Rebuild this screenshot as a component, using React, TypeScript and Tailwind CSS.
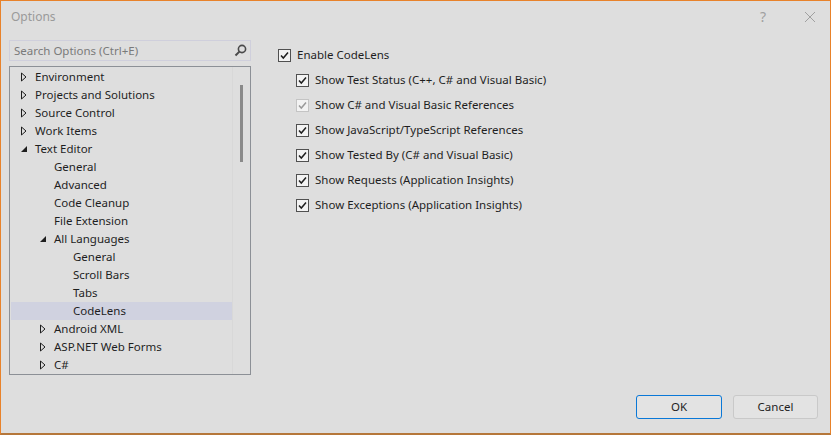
import React from "react";

type Node = { label: string; level: number; arrow?: "closed" | "open"; selected?: boolean };

const tree: Node[] = [
  { label: "Environment", level: 0, arrow: "closed" },
  { label: "Projects and Solutions", level: 0, arrow: "closed" },
  { label: "Source Control", level: 0, arrow: "closed" },
  { label: "Work Items", level: 0, arrow: "closed" },
  { label: "Text Editor", level: 0, arrow: "open" },
  { label: "General", level: 1 },
  { label: "Advanced", level: 1 },
  { label: "Code Cleanup", level: 1 },
  { label: "File Extension", level: 1 },
  { label: "All Languages", level: 1, arrow: "open" },
  { label: "General", level: 2 },
  { label: "Scroll Bars", level: 2 },
  { label: "Tabs", level: 2 },
  { label: "CodeLens", level: 2, selected: true },
  { label: "Android XML", level: 1, arrow: "closed" },
  { label: "ASP.NET Web Forms", level: 1, arrow: "closed" },
  { label: "C#", level: 1, arrow: "closed" },
];

const options = [
  { label: "Show Test Status (C++, C# and Visual Basic)" },
  { label: "Show C# and Visual Basic References", disabled: true },
  { label: "Show JavaScript/TypeScript References" },
  { label: "Show Tested By (C# and Visual Basic)" },
  { label: "Show Requests (Application Insights)" },
  { label: "Show Exceptions (Application Insights)" },
];

function Arrow({ kind }: { kind: "closed" | "open" }) {
  if (kind === "open") {
    return (
      <svg width="8" height="8" viewBox="0 0 8 8">
        <path d="M7 1 L7 7 L1 7 Z" fill="#1e1e1e" />
      </svg>
    );
  }
  return (
    <svg width="8" height="10" viewBox="0 0 8 10">
      <path d="M1.5 1 L6 5 L1.5 9 Z" fill="none" stroke="#1e1e1e" strokeWidth="1" />
    </svg>
  );
}

function Check({ disabled }: { disabled?: boolean }) {
  return (
    <span
      className={
        "w-[13px] h-[13px] flex items-center justify-center border bg-[#f3f3f3] " +
        (disabled ? "border-[#c4c4c4]" : "border-[#505050]")
      }
    >
      <svg width="11" height="11" viewBox="0 0 11 11">
        <path
          d="M2 5.5 L4.3 8 L9 2.5"
          fill="none"
          stroke={disabled ? "#9a9a9a" : "#1e1e1e"}
          strokeWidth="1.5"
        />
      </svg>
    </span>
  );
}

export default function App() {
  return (
    <div
      className="w-[831px] h-[435px] bg-[#dedede] border border-[#e8822a] border-b-[2px] border-b-[#b5773a] flex flex-col text-[11.5px] text-[#1e1e1e]"
      style={{ fontFamily: '"Noto Sans", "Segoe UI", sans-serif' }}
    >
      {/* title bar */}
      <div className="h-[31px] flex items-center pl-[10px] pr-[14px] shrink-0">
        <span className="text-[#9a9a9a] text-[12px]">Options</span>
        <span className="ml-auto text-[#a0a0a0] text-[14px] mr-[38px]">?</span>
        <svg width="12" height="12" viewBox="0 0 12 12">
          <path d="M1 1 L11 11 M11 1 L1 11" stroke="#a0a0a0" strokeWidth="1" />
        </svg>
      </div>

      <div className="flex flex-1 min-h-0 pl-[8px]">
        {/* left side */}
        <div className="w-[242px] flex flex-col pt-[8px]">
          <div className="h-[21px] border border-[#cfcfdc] flex items-center pl-[4px] pr-[3px]">
            <span className="text-[#7a7a7a]">Search Options (Ctrl+E)</span>
            <svg className="ml-auto" width="13" height="13" viewBox="0 0 13 13">
              <circle cx="8" cy="5" r="3.6" fill="none" stroke="#4a4a4a" strokeWidth="1.6" />
              <path d="M5.4 7.6 L1.5 11.5" stroke="#4a4a4a" strokeWidth="2" />
            </svg>
          </div>
          <div className="mt-[5px] h-[309px] border border-[#8c9096] flex overflow-hidden">
            <div className="w-[222px] pt-[1px] pl-[1px]">
              {tree.map((n, i) => (
                <div
                  key={i}
                  className={"h-[18px] flex items-center " + (n.selected ? "bg-[#d0d2e0]" : "")}
                  style={{ paddingLeft: 9 + n.level * 19 }}
                >
                  <span className="w-[15px] flex items-center">
                    {n.arrow && <Arrow kind={n.arrow} />}
                  </span>
                  <span className="leading-none">{n.label}</span>
                </div>
              ))}
            </div>
            <div className="flex-1 border-l border-[#d8d8d8] flex justify-center pt-[18px]">
              <div className="w-[3px] h-[77px] bg-[#8a8a8a]" />
            </div>
          </div>
        </div>

        {/* right side */}
        <div className="flex-1 flex flex-col pl-[27px] pt-[16px] pr-[12px]">
          <label className="flex items-center gap-[6px] h-[14px]">
            <Check />
            <span>Enable CodeLens</span>
          </label>
          <div className="flex flex-col pl-[18px] mt-[11px] gap-[11px]">
            {options.map((o, i) => (
              <label key={i} className="flex items-center gap-[6px] h-[14px]">
                <Check disabled={o.disabled} />
                <span>{o.label}</span>
              </label>
            ))}
          </div>
          <div className="mt-auto mb-[14px] flex justify-end gap-[11px]">
            <button className="w-[86px] h-[24px] border border-[#0a78d7] rounded-[3px] bg-[#e3e3e3]">OK</button>
            <button className="w-[85px] h-[24px] border border-[#c9c9c9] rounded-[3px] bg-[#e3e3e3]">Cancel</button>
          </div>
        </div>
      </div>
    </div>
  );
}
